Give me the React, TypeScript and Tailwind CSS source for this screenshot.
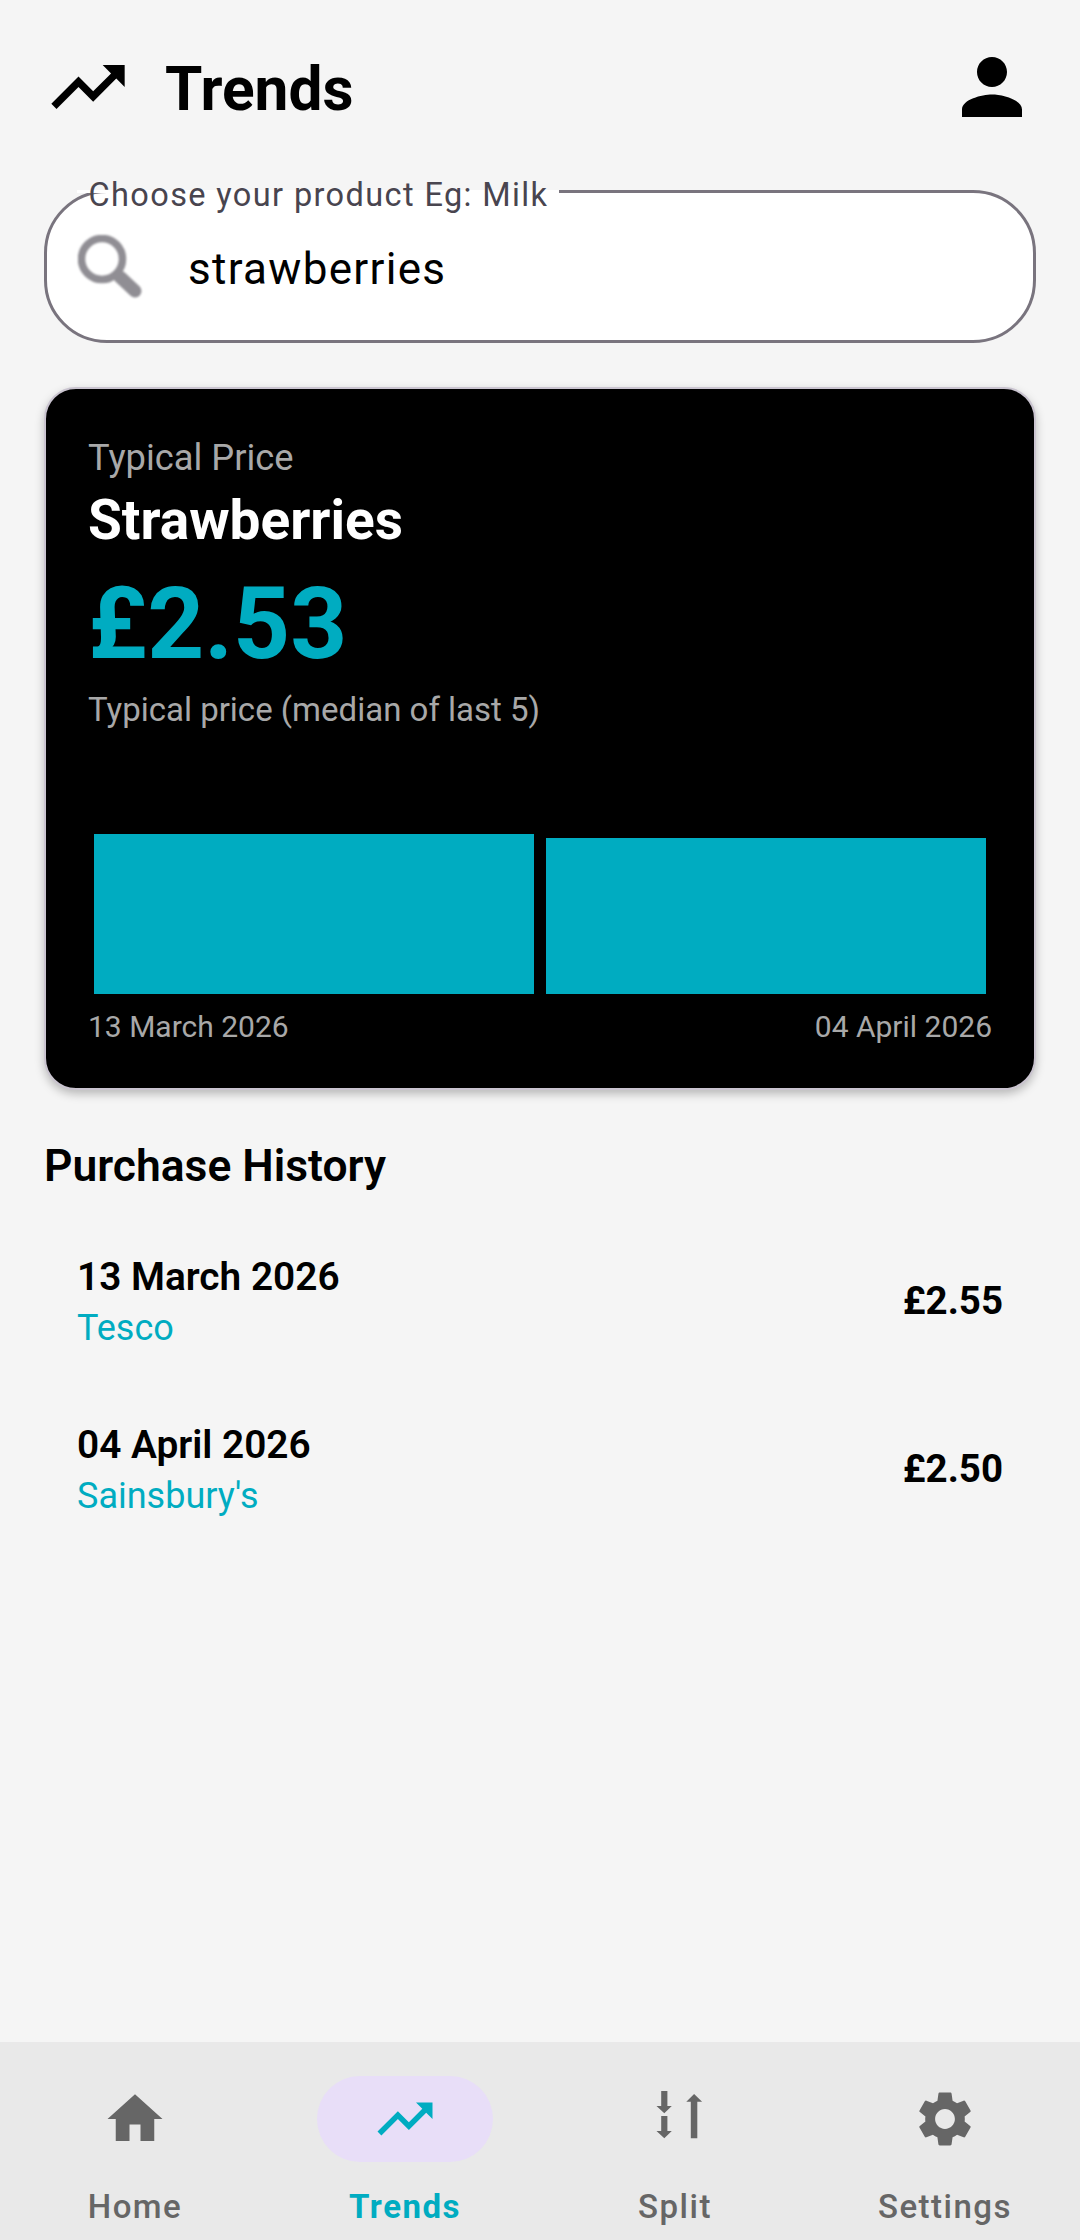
const history = [
  { date: '13 March 2026', store: 'Tesco', price: '£2.55' },
  { date: '04 April 2026', store: "Sainsbury's", price: '£2.50' },
]

const TrendIcon = ({ className }: { className: string }) => (
  <svg viewBox="0 0 24 24" className={className} fill="currentColor">
    <path d="M16 6l2.29 2.29-4.88 4.88-4-4L2 16.59 3.41 18l6-6 4 4 6.3-6.29L22 12V6z" />
  </svg>
)

const HomeIcon = () => (
  <svg viewBox="0 0 24 24" className="w-[66px] h-[66px]" fill="currentColor">
    <path d="M10 20v-6h4v6h5v-8h3L12 3 2 12h3v8z" />
  </svg>
)

const SplitIcon = () => (
  <svg viewBox="0 0 66 66" className="w-[66px] h-[66px]" fill="currentColor">
    <path d="M19.2 5h6.2v15h4.4l-7.5 7.3-7.8-7.3h4.7z" />
    <path d="M19.2 30h6.2v15h4.4l-7.5 7.3-7.8-7.3h4.7z" />
    <path d="M48.8 52.3h6.5V15.7h4.8L52.1 8l-7.8 7.7h4.5z" />
  </svg>
)

const GearIcon = () => (
  <svg viewBox="0 0 24 24" className="w-[66px] h-[66px]" fill="currentColor">
    <path d="M19.14 12.94c.04-.3.06-.61.06-.94 0-.32-.02-.64-.07-.94l2.03-1.58c.18-.14.23-.41.12-.61l-1.92-3.32c-.12-.22-.37-.29-.59-.22l-2.39.96c-.5-.38-1.03-.7-1.62-.94l-.36-2.54c-.04-.24-.24-.41-.48-.41h-3.84c-.24 0-.43.17-.47.41l-.36 2.54c-.59.24-1.13.57-1.62.94l-2.39-.96c-.22-.08-.47 0-.59.22L2.74 8.87c-.12.21-.08.47.12.61l2.03 1.58c-.05.3-.09.63-.09.94s.02.64.07.94l-2.03 1.58c-.18.14-.23.41-.12.61l1.92 3.32c.12.22.37.29.59.22l2.39-.96c.5.38 1.03.7 1.62.94l.36 2.54c.05.24.24.41.48.41h3.84c.24 0 .44-.17.47-.41l.36-2.54c.59-.24 1.13-.56 1.62-.94l2.39.96c.22.08.47 0 .59-.22l1.92-3.32c.12-.22.07-.47-.12-.61l-2.01-1.58zM12 15.6c-1.98 0-3.6-1.62-3.6-3.6s1.62-3.6 3.6-3.6 3.6 1.62 3.6 3.6-1.62 3.6-3.6 3.6z" />
  </svg>
)

const NavItem = ({ label, active, children }: { label: string; active?: boolean; children: React.ReactNode }) => (
  <div className="flex-1 flex flex-col items-center">
    <div className={`w-[176px] h-[86px] rounded-full flex items-center justify-center ${active ? 'bg-[#e8def8] text-[#00acc1]' : 'text-[#666666]'}`}>
      {children}
    </div>
    <span className={`mt-[22px] text-[33px] leading-[46px] tracking-[1.5px] ${active ? 'font-bold text-[#00acc1]' : 'font-medium text-[#666666]'}`}>
      {label}
    </span>
  </div>
)

export default function App() {
  return (
    <div className="w-[1080px] h-[2240px] bg-[#f5f5f5] flex flex-col font-['Roboto',sans-serif] text-black overflow-hidden">
      <header className="h-[190px] pl-[44px] pr-[43px] pt-[42px] flex items-start">
        <TrendIcon className="w-[88px] h-[90px]" />
        <h1 className="ml-[33px] mt-[3px] text-[60.4px] leading-[90px] font-bold">Trends</h1>
        <svg viewBox="0 0 24 24" className="ml-auto w-[90px] h-[90px]" fill="currentColor">
          <path d="M12 12c2.21 0 4-1.79 4-4s-1.79-4-4-4-4 1.79-4 4 1.79 4 4 4zm0 2c-2.67 0-8 1.34-8 4v2h16v-2c0-2.66-5.33-4-8-4z" />
        </svg>
      </header>

      <div className="mx-[44px] relative h-[153px] rounded-[63px] border-[3px] border-[#79747e] bg-white flex items-center">
        <span className="absolute left-[30px] top-[-3px] w-[482px] h-[3px] bg-white" />
        <span className="absolute left-[41.5px] top-[-20px] text-[32.5px] leading-[44px] tracking-[1.38px] text-[#49454f] whitespace-nowrap">
          Choose your product Eg: Milk
        </span>
        <svg viewBox="0 0 66 66" className="ml-[31px] mt-[2px] w-[66px] h-[66px] text-[#908e94] blur-[0.8px]" fill="none" stroke="currentColor">
          <circle cx="24" cy="24" r="20.5" strokeWidth="7.5" />
          <path d="M42 42l15 14" strokeWidth="13" strokeLinecap="round" />
        </svg>
        <span className="ml-[44px] mt-[4px] text-[44px] leading-[56px] tracking-[1.3px]">strawberries</span>
      </div>

      <section className="mx-[44px] mt-[44px] h-[703px] rounded-[32px] bg-black border-2 border-[#cac4d0] shadow-[0_4px_10px_rgba(0,0,0,0.25)] px-[42px] flex flex-col">
        <p className="mt-[45.5px] text-[36.3px] leading-[46px] text-[#a8a8a8]">Typical Price</p>
        <p className="mt-[4px] text-[55px] leading-[70px] font-bold text-white">Strawberries</p>
        <p className="mt-[7px] text-[99.5px] leading-[124px] font-bold text-[#00acc1]">£2.53</p>
        <p className="mt-[2px] text-[33px] leading-[44px] text-[#a8a8a8]">Typical price (median of last 5)</p>
        <div className="mt-[102px] h-[160px] px-[6px] flex items-end gap-[12px]">
          <div className="flex-1 h-[160px] bg-[#00acc1]" />
          <div className="flex-1 h-[156px] bg-[#00acc1]" />
        </div>
        <div className="mt-[13px] flex justify-between text-[30px] leading-[40px] text-[#a8a8a8]">
          <span>13 March 2026</span>
          <span>04 April 2026</span>
        </div>
      </section>

      <h2 className="ml-[44px] mt-[46px] text-[44.4px] leading-[60px] font-semibold">Purchase History</h2>

      <ul className="mt-[48.5px] px-[77px] flex flex-col gap-[54px]">
        {history.map((row) => (
          <li key={row.date} className="h-[114px] flex items-center justify-between">
            <div>
              <p className="text-[38.8px] leading-[53px] font-semibold">{row.date}</p>
              <p className="text-[36px] leading-[50px] text-[#00acc1]">{row.store}</p>
            </div>
            <span className="pb-[2px] text-[38.5px] font-bold">{row.price}</span>
          </li>
        ))}
      </ul>

      <nav className="mt-auto h-[198px] pt-[34px] bg-[#e9e9e9] flex">
        <NavItem label="Home"><HomeIcon /></NavItem>
        <NavItem label="Trends" active>
          <TrendIcon className="w-[66px] h-[66px]" />
        </NavItem>
        <NavItem label="Split"><SplitIcon /></NavItem>
        <NavItem label="Settings"><GearIcon /></NavItem>
      </nav>
    </div>
  )
}
